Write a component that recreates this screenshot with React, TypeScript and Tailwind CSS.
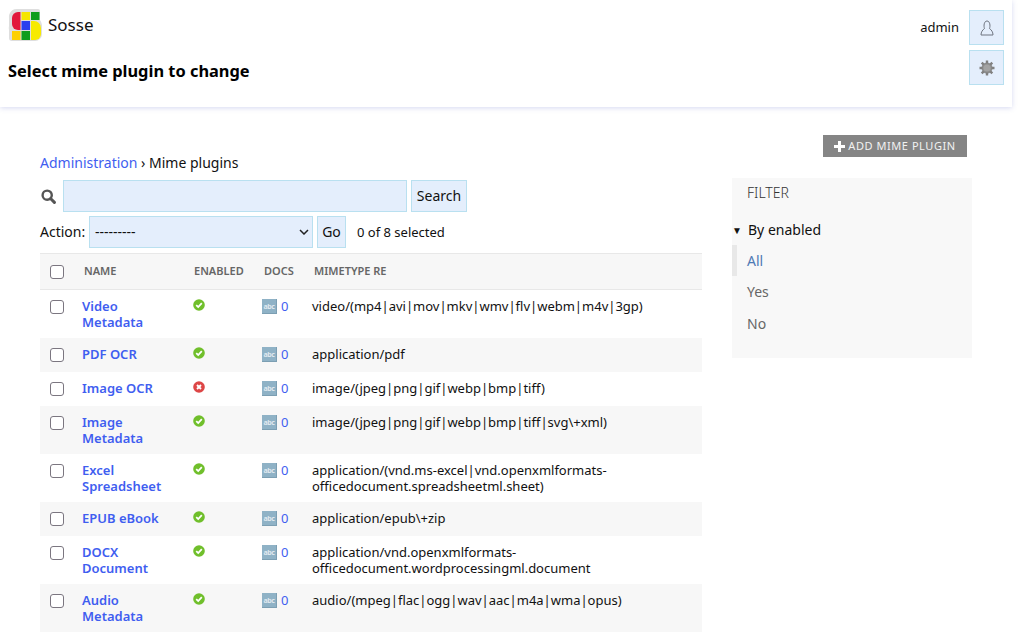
import React from 'react';

const plugins = [
  { name: 'Video Metadata', enabled: true, re: 'video/(mp4|avi|mov|mkv|wmv|flv|webm|m4v|3gp)', h: 'h-12' },
  { name: 'PDF OCR', enabled: true, re: 'application/pdf', h: 'h-[34px]' },
  { name: 'Image OCR', enabled: false, re: 'image/(jpeg|png|gif|webp|bmp|tiff)', h: 'h-[34px]' },
  { name: 'Image Metadata', enabled: true, re: 'image/(jpeg|png|gif|webp|bmp|tiff|svg\\+xml)', h: 'h-12' },
  { name: 'Excel Spreadsheet', enabled: true, re: 'application/(vnd.ms-excel|vnd.openxmlformats-officedocument.spreadsheetml.sheet)', h: 'h-12' },
  { name: 'EPUB eBook', enabled: true, re: 'application/epub\\+zip', h: 'h-[34px]' },
  { name: 'DOCX Document', enabled: true, re: 'application/vnd.openxmlformats-officedocument.wordprocessingml.document', h: 'h-12' },
  { name: 'Audio Metadata', enabled: true, re: 'audio/(mpeg|flac|ogg|wav|aac|m4a|wma|opus)', h: 'h-12' },
];

const Logo = () => (
  <svg width="34" height="34" viewBox="0 0 34 34" className="shrink-0">
    <path d="M10 1H30a2 2 0 0 1 2 2V12a10 10 0 0 1 2 7V26a7 7 0 0 1-7 7H4a3 3 0 0 1-3-3V22a10 10 0 0 1 0-4V10a8 8 0 0 1 9-9Z" fill="#dedede" />
    <path d="M12.5 4H10a6 6 0 0 0-6 6v6a6 6 0 0 0 6 6h2.5z" fill="#e2183c" />
    <rect x="13.5" y="4" width="8.5" height="8" fill="#f5e600" />
    <rect x="23" y="4" width="8.5" height="8" fill="#0f9d1c" />
    <rect x="13.5" y="13" width="8.5" height="9" fill="#2a3ff0" />
    <rect x="4" y="23" width="8.5" height="9" fill="#fdd000" />
    <rect x="13.5" y="23" width="8.5" height="9" fill="#0f9d1c" />
    <path d="M23 13h3a7 7 0 0 1 7 7v6a6 6 0 0 1-6 6h-4z" fill="#f7ea00" />
  </svg>
);

const UserIcon = () => (
  <svg width="14" height="16" viewBox="0 0 14 16" fill="none" stroke="#6f7580" strokeWidth="1">
    <path d="M4.5 8.5 C3.5 6 4 1 7 1 C10 1 10.5 6 9.5 8.5 C11.5 10 13 12 13 15 H1 C1 12 2.5 10 4.5 8.5 Z" />
  </svg>
);

const GearIcon = () => (
  <svg width="16" height="16" viewBox="0 0 16 16">
    <circle cx="8" cy="8" r="5.5" fill="#8d8d8d" />
    <circle cx="8" cy="8" r="3.6" fill="#a3a3a3" />
    <g stroke="#808080" strokeWidth="2.4">
      <path d="M8 0.5v3M8 12.5v3M0.5 8h3M12.5 8h3M2.7 2.7l2 2M11.3 11.3l2 2M13.3 2.7l-2 2M4.7 11.3l-2 2" />
    </g>
  </svg>
);

const SearchIcon = () => (
  <svg width="15" height="15" viewBox="0 0 15 15" fill="none" stroke="#555" strokeWidth="2.4">
    <circle cx="6.2" cy="6.2" r="4.6" />
    <path d="M9.8 9.8 13.4 13.4" strokeLinecap="round" strokeWidth="3" />
  </svg>
);

const StatusIcon = ({ ok }: { ok: boolean }) => (
  <svg width="12" height="12" viewBox="0 0 12 12" className="mt-px">
    <circle cx="6" cy="6" r="5.8" fill={ok ? '#70bf2b' : '#dd4646'} />
    {ok ? (
      <path d="M3.2 6.2 5.2 8 8.8 4.2" fill="none" stroke="#fff" strokeWidth="1.8" />
    ) : (
      <path d="M4 4 8 8M8 4 4 8" fill="none" stroke="#fff" strokeWidth="1.9" />
    )}
  </svg>
);

const AbcIcon = () => (
  <span className="flex items-center justify-center w-[15px] h-[15px] mt-px bg-[#8fb2c6] border-b border-r border-[#7c9fb3] text-[#dfe8ee] text-[7px] leading-none font-bold tracking-tighter">
    abc
  </span>
);

function Checkbox() {
  return <span className="inline-block w-[14px] h-[14px] rounded-[3px] border border-[#7b7680] bg-white" />;
}

export default function App() {
  return (
    <div className="h-[633px] overflow-hidden bg-white text-[#111] text-[13px] font-['Noto_Sans',sans-serif]">
      <header className="w-[1012px] h-[107px] bg-white shadow-[0_1px_5px_rgba(120,130,210,0.3)] flex justify-between">
        <div className="pl-2">
          <div className="flex items-center gap-[6px] pt-2">
            <Logo />
            <span className="text-[17px] leading-[34px]">Sosse</span>
          </div>
          <h1 className="mt-[18px] text-[16.4px] leading-[22px] font-bold text-black">Select mime plugin to change</h1>
        </div>
        <div className="flex pt-[10px] pr-2 gap-[10px]">
          <span className="leading-[35px]">admin</span>
          <div className="flex flex-col gap-[5px]">
            <button className="w-[35px] h-[35px] flex items-center justify-center bg-[#e4eefc] border border-[#b9e0f0]">
              <UserIcon />
            </button>
            <button className="w-[35px] h-[35px] flex items-center justify-center bg-[#e4eefc] border border-[#b9e0f0]">
              <GearIcon />
            </button>
          </div>
        </div>
      </header>

      <main className="flex pl-10 pr-[52px] gap-[30px]">
        <div className="w-[662px] pt-[47px]">
          <div className="leading-[18px] text-sm h-[18px]">
            <a className="text-[#3f5ef0]">Administration</a> › Mime plugins
          </div>
          <div className="flex items-center mt-[8px] h-8">
            <span className="w-[23px] flex pl-px"><SearchIcon /></span>
            <input className="w-[344px] h-8 bg-[#e4eefc] border border-[#b9e0f0]" />
            <button className="ml-1 h-8 w-14 bg-[#e4eefc] border border-[#b9e0f0] text-sm">Search</button>
          </div>
          <div className="flex items-center mt-1 h-8 text-sm">
            <span className="w-[49px]">Action:</span>
            <div className="relative w-[224px] h-8">
              <select className="appearance-none w-full h-8 bg-[#e4eefc] border border-[#b9e0f0] pl-[5px] text-[14px]">
                <option>---------</option>
              </select>
              <svg width="10" height="6" viewBox="0 0 10 6" className="absolute right-[4px] top-[13px]" fill="none" stroke="#222" strokeWidth="1.5">
                <path d="M1 1l4 4 4-4" />
              </svg>
            </div>
            <button className="ml-1 h-8 w-[29px] bg-[#e4eefc] border border-[#b9e0f0]">Go</button>
            <span className="ml-[11px] text-[13px]">0 of 8 selected</span>
          </div>
          <div className="mt-[5px] text-[13px] leading-4">
            <div className="flex items-center h-[37px] bg-[#f7f7f7] border-y border-[#e8e8e8] text-[#666] text-[11px] font-semibold">
              <div className="w-11 pl-[10px] flex"><Checkbox /></div>
              <div className="w-[110px] pb-[2px]">NAME</div>
              <div className="w-[70px] pb-[2px]">ENABLED</div>
              <div className="w-[50px] pb-[2px]">DOCS</div>
              <div className="pb-[2px]">MIMETYPE RE</div>
            </div>
            {plugins.map((p, i) => (
              <div key={p.name} className={`flex pt-2 ${p.h} ${i % 2 === 1 ? 'bg-[#f7f7f7]' : 'bg-white'}`}>
                <div className="w-[42px] pl-[10px] flex items-start pt-[2px]"><Checkbox /></div>
                <div className="w-[111px] pr-6 font-semibold text-[#3f5ef0]">{p.name}</div>
                <div className="w-[69px]"><StatusIcon ok={p.enabled} /></div>
                <div className="w-[50px] flex items-start gap-1 text-[#3f5ef0]"><AbcIcon /> 0</div>
                <div className="w-[340px] break-words">{p.re}</div>
              </div>
            ))}
          </div>
        </div>

        <div className="w-60 pt-[28px]">
          <div className="flex justify-end pr-[5px]">
            <button className="h-[22px] w-36 bg-[#858585] text-[#f2f2f2] text-[11px] tracking-[0.55px] flex items-center justify-center gap-[3px]">
              <svg width="11" height="11" viewBox="0 0 11 11"><path d="M4 0h3v4h4v3H7v4H4V7H0V4h4z" fill="#fff" /></svg>
              ADD MIME PLUGIN
            </button>
          </div>
          <aside className="mt-[21px] h-[180px] bg-[#f8f8f8]">
            <div className="pl-[15px] pt-[6px] text-sm leading-[18px] text-[#333] font-light">FILTER</div>
            <div className="flex items-center h-[18px] mt-[19px] text-sm text-[#111]">
              <span className="w-4 text-[10px] leading-none">▼</span>
              By enabled
            </div>
            <ul className="mt-[6px] text-sm">
              <li className="h-[31px] leading-[31px] pl-[10px] border-l-[5px] border-[#e8e8e8] text-[#4f7ab5]">All</li>
              <li className="h-[32px] leading-[31px] pl-[15px] text-[#666]">Yes</li>
              <li className="h-[32px] leading-[32px] pl-[15px] text-[#666]">No</li>
            </ul>
          </aside>
        </div>
      </main>
    </div>
  );
}
